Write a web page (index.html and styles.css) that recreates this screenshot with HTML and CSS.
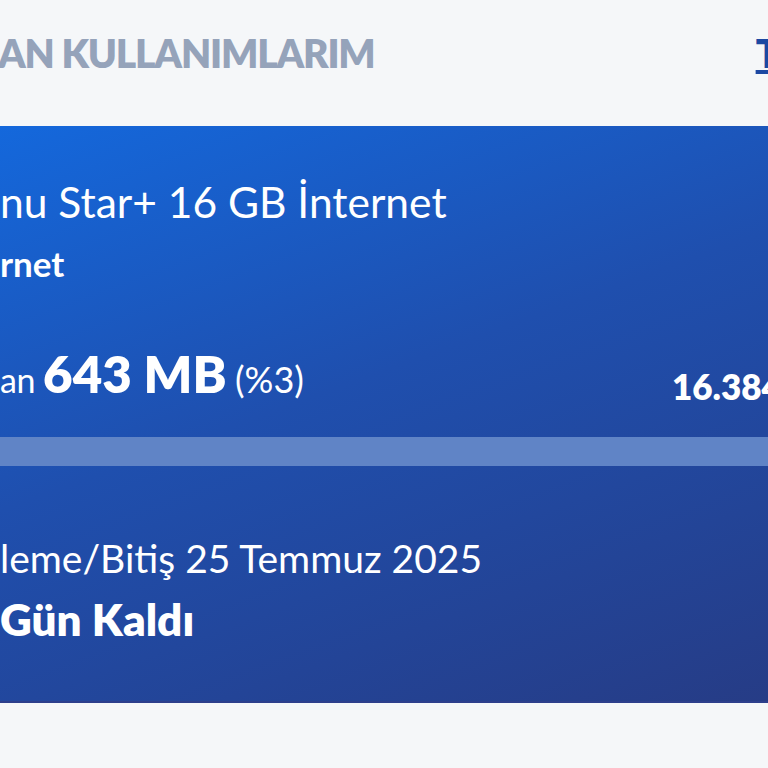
FILE: index.html
```html
<!DOCTYPE html>
<html lang="tr">
<head>
<meta charset="UTF-8" />
<meta name="viewport" content="width=device-width, initial-scale=1" />
<title>Kalan Kullanımlarım</title>
<link rel="stylesheet" href="styles.css">
</head>
<body>
<div class="page">
  <div class="section-head">
    <h2>AN KULLANIMLARIM</h2>
    <a href="#" class="all-link">T</a>
  </div>

  <div class="usage-card">
    <div class="package-name">nu Star+ 16 GB İnternet</div>
    <div class="usage-type">rnet</div>

    <div class="usage-row">
      <div class="used">an <strong>643 MB</strong> <span class="pct">(%3)</span></div>
      <div class="total">16.384 MB</div>
    </div>

    <div class="progress">
      <div class="progress-fill" style="width: 3%"></div>
    </div>

    <div class="renew">leme/Bitiş 25 Temmuz 2025</div>
    <div class="days-left">Gün Kaldı</div>
  </div>
</div>
</body>
</html>
```

FILE: styles.css
```css
html, body {
  margin: 0;
  padding: 0;
}
body {
  font-family: Lato, "Noto Sans", sans-serif;
  background: #f5f7f9;
  width: 768px;
  height: 768px;
  overflow: hidden;
}
.section-head {
  display: flex;
  justify-content: space-between;
  align-items: center;
  height: 126px;
  box-sizing: border-box;
  padding-bottom: 20px;
}
.section-head h2 {
  margin: 0 0 0 -2px;
  font-size: 39px;
  font-weight: 800;
  color: #95a3ba;
  letter-spacing: -1.2px;
}
.all-link,
.all-link:visited {
  color: #1c48a2;
  font-size: 40px;
  font-weight: 800;
  text-decoration: underline;
  text-decoration-color: #1c48a2;
  margin-right: -12px;
}
.usage-card {
  height: 577px;
  box-sizing: border-box;
  padding-top: 52px;
  color: #fff;
  background: linear-gradient(160deg, #1468dc 0%, #1f4fae 45%, #263c86 100%);
  border-bottom: 2px solid #2d3f8c;
}
.package-name {
  font-size: 42.5px;
  line-height: 48px;
  white-space: nowrap;
}
.usage-type {
  font-size: 35px;
  font-weight: 700;
  line-height: 40px;
  margin-top: 17px;
}
.used {
  font-size: 34px;
  letter-spacing: -0.5px;
}
.used strong {
  font-size: 51px;
  font-weight: 800;
  letter-spacing: 0;
}
.used .pct {
  font-size: 36px;
  letter-spacing: 0;
}
.usage-row {
  display: flex;
  justify-content: space-between;
  align-items: baseline;
  margin-top: 60px;
  white-space: nowrap;
}
.total {
  font-size: 35px;
  font-weight: 800;
  margin-right: -79px;
  position: relative;
  top: 7px;
}
.progress {
  height: 29px;
  margin-top: 33px;
  background: #6084c6;
}
.progress-fill {
  height: 100%;
  background: #fff;
  margin-left: -40px;
}
.renew {
  font-size: 39px;
  line-height: 44px;
  margin-top: 70px;
  white-space: nowrap;
}
.days-left {
  font-size: 44px;
  font-weight: 800;
  line-height: 48px;
  margin-top: 15px;
}
```
